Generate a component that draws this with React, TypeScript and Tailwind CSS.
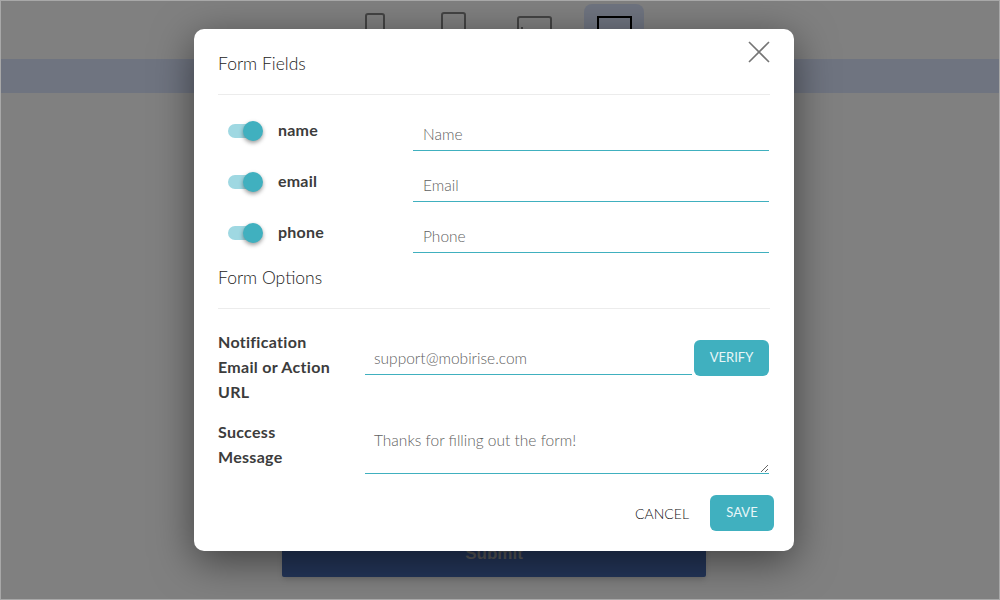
const fields = [
  { name: "name", placeholder: "Name" },
  { name: "email", placeholder: "Email" },
  { name: "phone", placeholder: "Phone" },
];

function Toggle() {
  return (
    <div className="relative h-[20px] w-[35px] shrink-0">
      <div className="absolute left-0 top-[3px] h-[14px] w-[30px] rounded-full bg-[#9fd8e2]" />
      <div className="absolute right-0 top-0 h-[20px] w-[20px] rounded-full bg-[#40b0bf] shadow-[0_2px_4px_rgba(0,0,0,0.4)]" />
    </div>
  );
}

function DeviceIcons() {
  return (
    <div className="flex h-[58px] items-start pl-[364px]">
      <div className="mt-[12px] h-[40px] w-[20px] rounded-[3px] border-2 border-[#444]" />
      <div className="ml-[56px] mt-[11px] h-[40px] w-[25px] rounded-[3px] border-2 border-[#444]" />
      <div className="relative ml-[51px] mt-[15px] h-[30px] w-[35px] rounded-[3px] border-2 border-[#444]">
        <div className="absolute left-[2px] top-[9px] h-[2px] w-[2px] bg-[#444]" />
      </div>
      <div className="ml-[32px] mt-[3px] flex h-[55px] w-[60px] justify-center rounded-t-[8px] bg-[#6f7480] pt-[12px]">
        <div className="h-[26px] w-[35px] border-2 border-black" />
      </div>
    </div>
  );
}

export default function App() {
  return (
    <div
      className="relative h-[600px] w-[1000px] overflow-hidden border border-[#a8a8a8] bg-[#808080]"
      style={{ fontFamily: '"Lato", "Open Sans", sans-serif' }}
    >
      <DeviceIcons />
      <div className="h-[34px] bg-[#6f7480]" />
      <div className="flex justify-center pr-[12px] pt-[438px]">
        <div
          className="flex h-[46px] w-[424px] items-center justify-center rounded-[2px] bg-[#24365a] text-[17px] font-bold text-[#5b5b5b] shadow-md"
          style={{ fontFamily: '"Liberation Sans", sans-serif' }}
        >
          Submit
        </div>
      </div>

      {/* modal */}
      <div className="absolute left-[193px] top-[28px] h-[522px] w-[600px] rounded-[10px] bg-white px-[24px] shadow-[0_10px_40px_rgba(0,0,0,0.5)]">
        <button className="absolute right-[23px] top-[11px] text-[#757575]">
          <svg width="24" height="24" viewBox="0 0 24 24" fill="none" stroke="currentColor" strokeWidth="1.6">
            <path d="M2 2 L22 22 M22 2 L2 22" />
          </svg>
        </button>

        <div className="flex h-[66px] items-center border-b border-[#ececec] pt-[6px] text-[17.5px] font-light text-[#222]">
          Form Fields
        </div>

        <div className="flex flex-col gap-[11px] pt-[16px]">
          {fields.map((f) => (
            <div key={f.name} className="flex h-[40px] items-start">
              <div className="flex w-[195px] items-center gap-[15px] pl-[10px] pt-[9px]">
                <Toggle />
                <span className="mb-[1px] text-[16px] font-bold leading-[20px] tracking-[0.2px] text-[#3c3c3c]">
                  {f.name}
                </span>
              </div>
              <input
                placeholder={f.placeholder}
                className="h-[40px] w-[356px] border-b border-[#40b0bf] px-[10px] pt-[6px] text-[15.5px] font-light outline-none placeholder:text-[#5f5f5f]"
              />
            </div>
          ))}
        </div>

        <div className="flex h-[56px] items-center border-b border-[#ececec] pb-[4px] text-[17.5px] font-light text-[#222]">
          Form Options
        </div>

        <div className="mt-[20px] flex">
          <div className="w-[147px] text-[16px] font-bold leading-[25px] tracking-[0.3px] text-[#3c3c3c]">
            Notification
            <br />
            Email or Action
            <br />
            URL
          </div>
          <div className="flex flex-1 items-start">
            <input
              placeholder="support@mobirise.com"
              className="mt-[11px] h-[35px] w-[327px] border-b border-[#40b0bf] px-[9px] pt-[2px] text-[15.5px] font-light outline-none placeholder:text-[#5f5f5f]"
            />
            <button className="ml-[2px] mt-[11px] h-[36px] w-[75px] rounded-[6px] bg-[#40b0bf] text-[13px] text-[#e8f6f8]">
              VERIFY
            </button>
          </div>
        </div>

        <div className="mt-[15px] flex">
          <div className="w-[147px] text-[16px] font-bold leading-[25px] tracking-[0.3px] text-[#3c3c3c]">
            Success
            <br />
            Message
          </div>
          <textarea
            placeholder="Thanks for filling out the form!"
            className="h-[55px] w-[404px] border-b border-[#40b0bf] px-[9px] pt-[10px] text-[15.5px] font-light outline-none placeholder:text-[#5f5f5f]"
          />
        </div>

        <div className="mr-[-4px] mt-[21px] flex items-center justify-end gap-[21px]">
          <button className="text-[14px] font-light text-[#111]">CANCEL</button>
          <button className="h-[36px] w-[64px] rounded-[6px] bg-[#40b0bf] text-[13px] text-[#e8f6f8]">
            SAVE
          </button>
        </div>
      </div>
    </div>
  );
}
